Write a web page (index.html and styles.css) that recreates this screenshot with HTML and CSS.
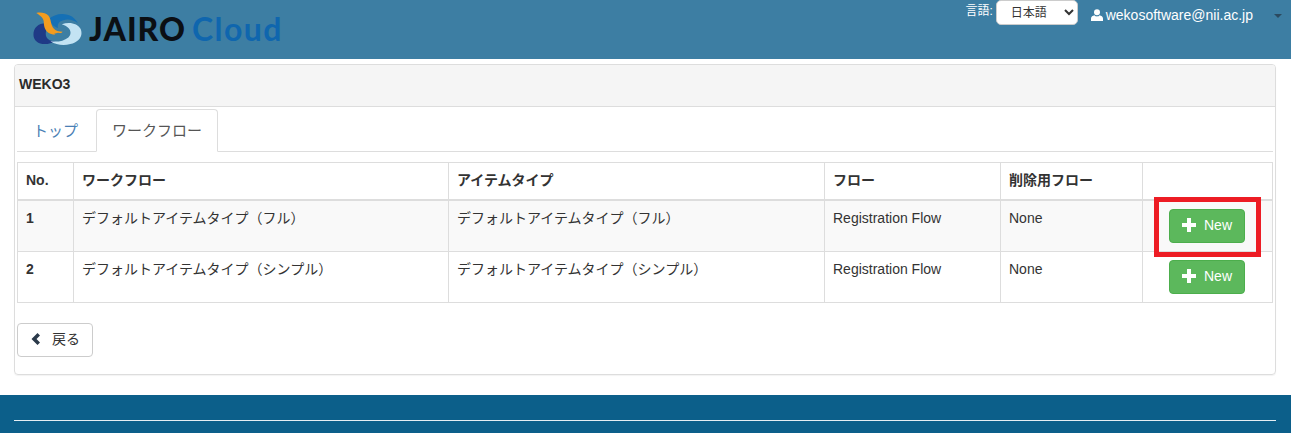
FILE: index.html
```html
<!DOCTYPE html>
<html lang="ja">
<head>
<meta charset="utf-8">
<title>WEKO3</title>
<link rel="stylesheet" href="styles.css">
</head>
<body>
<header class="topbar">
  <div class="brand">
    <svg class="brand-mark" width="50" height="34" viewBox="0 0 52 36">
      <path fill="#1f3a86" d="M13 12C5 12 0 17 0 24c0 6 5 10 12 10 4 0 8-1 11-3-6 0-10-3-10-8 0-4 2-7 6-9-2-1-4-2-6-2z"/>
      <path fill="#1570b5" d="M16 8c5-5 13-7 20-5 5 1 9 5 11 9-5-4-11-5-16-3-4 1-6 4-5 8-4-1-8-5-10-9z"/>
      <path fill="#c3e3f3" d="M30 13c8-3 17-1 20 5 3 7-2 14-11 16-7 2-15 1-21-3 7 1 14 0 19-4 3-3 3-7 0-10-2-2-4-3-7-4z"/>
      <path fill="#f39c1f" d="M3 1c5-1 10 0 13 3 3 4 2 9 5 13 2 3 6 4 10 4-3 3-8 4-13 2-5-2-7-7-7-12 0-4-3-7-8-10z"/>
      <path fill="#3d7fa3" d="M26 22c4 1 8 0 10-2 0 3-3 6-7 6-3 0-6-1-7-3z"/>
    </svg>
    <span class="brand-jairo">JAIRO</span>
    <span class="brand-cloud">Cloud</span>
  </div>
  <div class="topbar-right">
    <label class="lang-label" for="lang">言語:</label>
    <select class="lang-select" id="lang"><option>日本語</option></select>
    <span class="user">
      <svg class="user-icon" width="12" height="12" viewBox="0 0 12 12"><circle cx="6" cy="3.2" r="3" fill="#fff"/><path fill="#fff" d="M0 12V9.6C0 7.6 1.8 6.6 3.4 6.2 4 7 5 7.4 6 7.4S8 7 8.6 6.2C10.200 6.6 12 7.600 12 9.600V12z"/></svg>
      wekosoftware@nii.ac.jp
    </span>
    <span class="caret"></span>
  </div>
</header>

<main class="panel">
  <div class="panel-heading">WEKO3</div>
  <div class="panel-body">
    <ul class="tabs">
      <li class="tab"><a href="#">トップ</a></li>
      <li class="tab tab-active"><a href="#">ワークフロー</a></li>
    </ul>
    <table class="flows">
      <colgroup>
        <col class="c-no"><col class="c-flow"><col class="c-type"><col class="c-route"><col class="c-del"><col class="c-act">
      </colgroup>
      <thead>
        <tr><th>No.</th><th>ワークフロー</th><th>アイテムタイプ</th><th>フロー</th><th>削除用フロー</th><th></th></tr>
      </thead>
      <tbody>
        <tr class="odd">
          <th>1</th><td>デフォルトアイテムタイプ（フル）</td><td>デフォルトアイテムタイプ（フル）</td><td>Registration Flow</td><td>None</td>
          <td class="act"><span class="highlight"></span><button class="btn-new"><svg width="14" height="14" viewBox="0 0 14 14"><path fill="#fff" d="M5 0h4v5h5v4H9v5H5V9H0V5h5z"/></svg>New</button></td>
        </tr>
        <tr>
          <th>2</th><td>デフォルトアイテムタイプ（シンプル）</td><td>デフォルトアイテムタイプ（シンプル）</td><td>Registration Flow</td><td>None</td>
          <td class="act"><button class="btn-new"><svg width="14" height="14" viewBox="0 0 14 14"><path fill="#fff" d="M5 0h4v5h5v4H9v5H5V9H0V5h5z"/></svg>New</button></td>
        </tr>
      </tbody>
    </table>
    <button class="btn-back"><svg width="10" height="12" viewBox="0 0 10 12"><path fill="#2b3a4a" d="M6.500 0 9 2.500 5.500 6 9 9.500 6.500 12 0.500 6z"/></svg>戻る</button>
  </div>
</main>

<footer class="footer"><div class="footer-rule"></div></footer>
</body>
</html>
```
FILE: styles.css
```css
* { box-sizing: border-box; }
html, body { margin: 0; padding: 0; }
body {
  font-family: "Liberation Sans", "Noto Sans CJK JP", sans-serif;
  font-size: 14px;
  line-height: 20px;
  color: #333;
  background: #fff;
  height: 433px;
  overflow: hidden;
}
.topbar {
  height: 59px;
  background: #3d7ea3;
  display: flex;
  justify-content: space-between;
  align-items: flex-start;
}
.brand {
  display: flex;
  align-items: center;
  margin: 11px 0 0 33px;
  height: 36px;
}
.brand-mark { flex: none; margin-right: 6px; }
.brand-jairo {
  font: 900 32px/36px "Lato", sans-serif;
  color: #0b0f14;
  letter-spacing: 1px;
}
.brand-cloud {
  margin-left: 6px;
  font: 700 32px/36px "Lato", sans-serif;
  color: #0f66ae;
  letter-spacing: 1.4px;
}
.topbar-right {
  display: flex;
  align-items: flex-start;
  color: #fff;
}
.lang-label { font-size: 12px; line-height: 16px; margin: 3px 3px 0 0; }
.lang-select {
  width: 82px;
  height: 25px;
  border: 1px solid #ccc;
  border-radius: 5px;
  background: #fff;
  color: #333;
  font: 12px "Liberation Sans", "Noto Sans CJK JP", sans-serif;
  padding-left: 10px;
}
.user { margin: 5px 0 0 13px; line-height: 20px; display: flex; align-items: center; gap: 3px; }
.user-icon { flex: none; }
.caret {
  width: 0;
  height: 0;
  margin: 14px 9px 0 21px;
  border-top: 4px solid #2b4a60;
  border-left: 4px solid transparent;
  border-right: 4px solid transparent;
}
.panel {
  margin: 5px 15px 0 14px;
  height: 311px;
  border: 1px solid #ddd;
  border-radius: 4px;
  box-shadow: 0 1px 1px rgba(0,0,0,.05);
}
.panel-heading {
  height: 42px;
  padding: 9px 4px;
  background: #f5f5f5;
  border-bottom: 1px solid #ddd;
  border-radius: 3px 3px 0 0;
  font-weight: 700;
  font-size: 14px;
  line-height: 20px;
  color: #2b2b2b;
}
.panel-body { padding: 2px 2px 0; }
.tabs {
  list-style: none;
  margin: 0 0 10px;
  padding: 0;
  display: flex;
  height: 43px;
  border-bottom: 1px solid #ddd;
}
.tab a {
  display: block;
  height: 43px;
  padding: 11px 17px 11px 15px;
  font-size: 15px;
  line-height: 20px;
  color: #4a7fb5;
  text-decoration: none;
  border: 1px solid transparent;
}
.tab-active a {
  padding-right: 15px;
  color: #555;
  background: #fff;
  border: 1px solid #ddd;
  border-bottom-color: #fff;
  border-radius: 4px 4px 0 0;
}
.flows {
  width: 1255px;
  border-collapse: collapse;
  table-layout: fixed;
  border: 1px solid #ddd;
}
.c-no { width: 56px; }
.c-flow { width: 375px; }
.c-type { width: 376px; }
.c-route { width: 176px; }
.c-del { width: 142px; }
.c-act { width: 130px; }
.flows th, .flows td {
  border: 1px solid #ddd;
  padding: 7px 8px 8px;
  text-align: left;
  vertical-align: top;
  line-height: 20px;
  font-size: 14px;
}
.flows thead th { height: 37px; border-bottom: 2px solid #ddd; }
.flows tbody th, .flows tbody td { height: 51px; }
.odd { background: #f9f9f9; }
.flows .odd th, .flows .odd td { height: 52px; }
.flows .act { position: relative; padding: 8px 0 0 26px; }
.btn-new {
  display: flex;
  align-items: center;
  width: 76px;
  height: 34px;
  padding: 0 0 2px 12px;
  border: 1px solid #4cae4c;
  border-radius: 4px;
  background: #5cb85c;
  color: #fff;
  font: 14px/20px "Liberation Sans", sans-serif;
}
.btn-new svg { margin-right: 8px; flex: none; }
.highlight {
  position: absolute;
  left: 11px;
  top: -4px;
  width: 107px;
  height: 60px;
  border: 5px solid #ed1c24;
  z-index: 1;
  pointer-events: none;
}
.btn-back {
  display: flex;
  align-items: center;
  margin-top: 20px;
  width: 76px;
  height: 34px;
  padding: 0 0 2px 13px;
  border: 1px solid #ccc;
  border-radius: 4px;
  background: #fff;
  color: #333;
  font: 14px/20px "Liberation Sans", "Noto Sans CJK JP", sans-serif;
}
.btn-back svg { margin-right: 11px; flex: none; }
.footer {
  margin-top: 20px;
  height: 38px;
  background: #0c5f8a;
  padding: 25px 15px 0 14px;
}
.footer-rule { height: 1px; background: #e6eef3; }
```
